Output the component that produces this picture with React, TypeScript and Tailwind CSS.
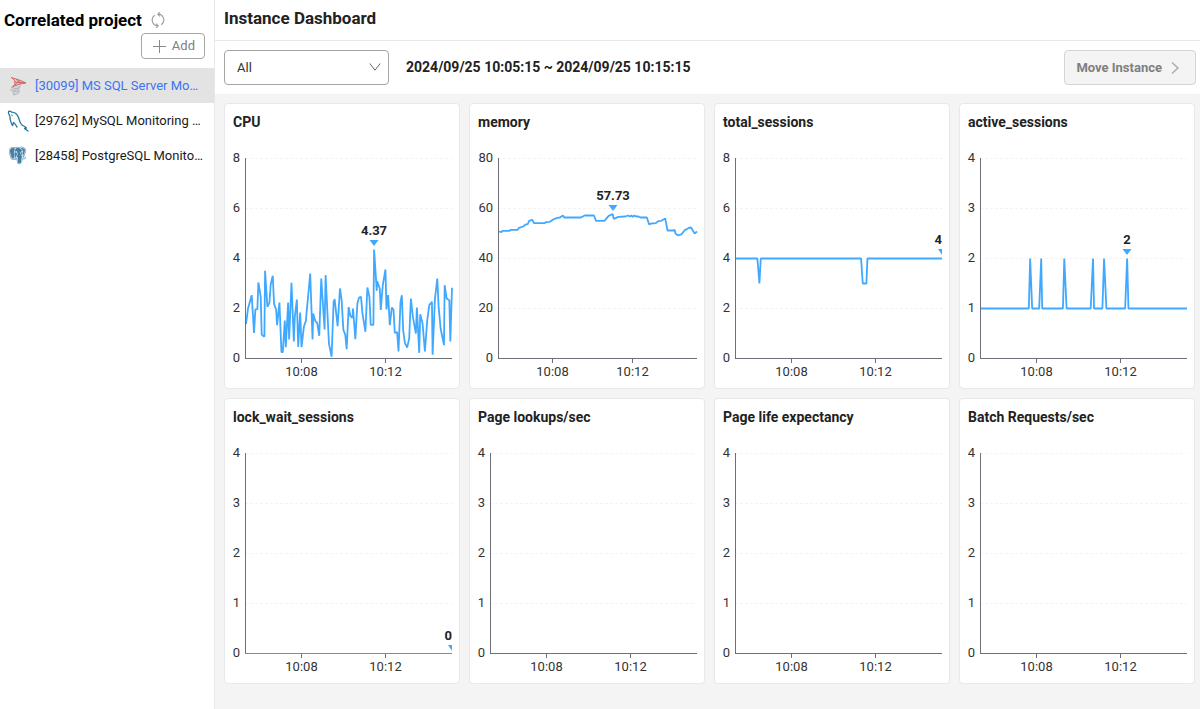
import { useState } from "react";
import { BiLogoPostgresql } from "react-icons/bi";

type Marker = { label: string; x: number; y: number; atEdge?: boolean };

type Chart = {
  title: string;
  ticks: number[];
  axisX: number;
  timeX: [number, number];
  baseline?: string;
  series?: { viewBox: string; points: string };
  marker?: Marker;
};

const CPU_POINTS =
  "64,312 70,265 81,225 88,338 92,268 98,267 101,187 108,230 111,343 119,350 121,152 128,260 134,248 138,192 144,167 148,252 154,268 157,315 164,247 170,396 174,396 180,301 183,381 190,247 193,358 200,188 207,364 210,290 216,238 220,380 226,277 230,381 237,320 243,302 256,160 263,358 265,280 271,302 277,309 283,347 289,175 299,328 302,165 312,370 320,410 326,245 329,237 338,318 345,205 350,240 355,328 361,345 365,387 371,261 376,287 382,293 384,265 391,357 397,250 402,232 408,230 412,278 421,335 427,202 433,230 437,314 445,314 447,88 455,212 456,183 464,205 467,269 473,195 481,148 484,268 489,225 494,315 500,262 505,268 509,338 516,336 520,394 526,245 530,225 534,330 539,368 546,382 552,355 557,235 563,290 572,340 575,262 582,398 585,282 592,310 599,394 606,300 612,255 620,245 622,404 629,235 636,175 640,260 646,325 656,375 658,195 664,235 672,240 675,364 680,203";

const MEMORY_POINTS =
  "88,394 95,396 98,392 118,392 124,389 144,389 148,383 160,379 168,373 174,372 178,362 187,359 193,369 224,369 228,366 240,365 250,358 262,353 270,352 279,346 283,352 333,352 344,346 372,346 378,362 403,362 416,347 428,342 431,356 445,350 466,349 474,346 479,349 484,346 488,350 493,346 498,349 505,349 511,352 530,352 537,373 543,370 557,369 564,363 573,362 585,355 592,391 610,391 613,389 616,401 624,406 634,402 643,390 650,387 655,383 662,382 668,392 673,400 680,394";

const ACTIVE_POINTS =
  "64,265 207,265 211,115 217,265 238,265 244,115 247,265 309,265 313,115 320,265 392,265 399,115 402,265 427,265 432,115 439,265 495,265 501,115 505,265 680,265";

const charts: Chart[] = [
  {
    title: "CPU",
    ticks: [8, 6, 4, 2, 0],
    axisX: 20,
    timeX: [76, 160],
    series: { viewBox: "61 -185 619 600", points: CPU_POINTS },
    marker: { label: "4.37", x: 149, y: 100 },
  },
  {
    title: "memory",
    ticks: [80, 60, 40, 20, 0],
    axisX: 28,
    timeX: [82, 162],
    series: { viewBox: "85 175 595 600", points: MEMORY_POINTS },
    marker: { label: "57.73", x: 143, y: 65 },
  },
  {
    title: "total_sessions",
    ticks: [8, 6, 4, 2, 0],
    axisX: 20,
    timeX: [76, 160],
    series: {
      viewBox: "77 -185 619 600",
      points: "78,115 144,115 150,190 154,115 454,115 459,190 470,190 473,115 696,115",
    },
    marker: { label: "4", x: 227, y: 109, atEdge: true },
  },
  {
    title: "active_sessions",
    ticks: [4, 3, 2, 1, 0],
    axisX: 20,
    timeX: [76, 160],
    series: { viewBox: "61 -185 619 600", points: ACTIVE_POINTS },
    marker: { label: "2", x: 167, y: 109 },
  },
  {
    title: "lock_wait_sessions",
    ticks: [4, 3, 2, 1, 0],
    axisX: 20,
    timeX: [76, 160],
    baseline: "#5596d0",
    marker: { label: "0", x: 227, y: 210, atEdge: true },
  },
  { title: "Page lookups/sec", ticks: [4, 3, 2, 1, 0], axisX: 20, timeX: [76, 160] },
  { title: "Page life expectancy", ticks: [4, 3, 2, 1, 0], axisX: 20, timeX: [76, 160] },
  { title: "Batch Requests/sec", ticks: [4, 3, 2, 1, 0], axisX: 20, timeX: [76, 160] },
];

const PLOT_TOP = 18;
const PLOT_HEIGHT = 200;
const PLOT_RIGHT = 227;

function LineChart({ chart }: { chart: Chart }) {
  const { ticks, axisX, timeX, series, marker, baseline = "#6e7079" } = chart;
  const bottom = PLOT_TOP + PLOT_HEIGHT;
  return (
    <svg viewBox="0 0 234 248" className="block h-auto w-full" role="img" aria-label={chart.title}>
      {ticks.map((tick, i) => {
        const y = PLOT_TOP + (i * PLOT_HEIGHT) / 4;
        return (
          <g key={tick}>
            {i < 4 && (
              <line x1={axisX} x2={PLOT_RIGHT} y1={y + 0.5} y2={y + 0.5} stroke="#f3f3f3" strokeDasharray="3 2" />
            )}
            <text x={axisX - 5} y={y + 4} textAnchor="end" fontSize="13" fill="#333333">
              {tick}
            </text>
          </g>
        );
      })}
      {series && (
        <svg
          x={axisX}
          y={PLOT_TOP + 0.5}
          width={PLOT_RIGHT - axisX}
          height={PLOT_HEIGHT}
          viewBox={series.viewBox}
          preserveAspectRatio="none"
          overflow="visible"
        >
          <polyline
            points={series.points}
            fill="none"
            stroke="#40a9ff"
            strokeWidth="1.8"
            strokeLinejoin="bevel"
            vectorEffect="non-scaling-stroke"
          />
        </svg>
      )}
      <line x1={axisX + 0.5} x2={axisX + 0.5} y1={PLOT_TOP} y2={bottom + 1} stroke="#6e7079" />
      {["10:08", "10:12"].map((time, i) => (
        <g key={time}>
          <line x1={timeX[i] + 0.5} x2={timeX[i] + 0.5} y1={bottom} y2={bottom + 5} stroke="#6e7079" />
          <text x={timeX[i] + 0.5} y={bottom + 18} textAnchor="middle" fontSize="13" fill="#333333">
            {time}
          </text>
        </g>
      ))}
      <line x1={axisX} x2={PLOT_RIGHT} y1={bottom + 0.5} y2={bottom + 0.5} stroke={baseline} />
      {marker && (
        <>
          <path
            d={
              marker.atEdge
                ? `M${marker.x - 4} ${marker.y}h4v6z`
                : `M${marker.x - 4.5} ${marker.y}h9l-4.5 6z`
            }
            fill="#40a9ff"
          />
          <text
            x={marker.x}
            y={marker.y - 5}
            textAnchor={marker.atEdge ? "end" : "middle"}
            fontSize="13"
            fontWeight="700"
            fill="#222222"
          >
            {marker.label}
          </text>
        </>
      )}
    </svg>
  );
}

function SqlServerIcon() {
  return (
    <svg viewBox="0 0 20 20" className="size-5" fill="none" aria-hidden="true">
      <path d="M3 1.5 C6.500 2.200 12 4 18 7 L12.500 8.600 L4.500 11 C7 8.500 8 5.500 3 1.500Z" fill="#e9c5c5" />
      <path
        d="M3 1.500 C9 3.200 13 4.400 18 7 C13 7.400 8 9 3.500 11.500 M4 2 C8 5 8 8 4.500 10.500 M8.500 3.200 L12.500 8 M6.500 6 L17 6.800 M12 4.500 L7 9"
        stroke="#cf5b5d"
        strokeWidth="0.900"
      />
      <path d="M2 13.500 C5 10.500 10 9.500 12.500 9.200 L12 15 C11 18 8 19 5.500 19 L4 16.500Z" fill="#d3d6d9" />
      <path d="M2 13.500 L6 15 L12.500 9.500 L10 13 L11.500 16 L6 15 L5.500 19 L10.500 17.500 M4 11.800 L10 13" stroke="#a9afb5" strokeWidth="0.700" />
    </svg>
  );
}

function MySqlIcon() {
  return (
    <svg viewBox="0 0 22 22" className="size-[22px]" fill="none" stroke="#1f7599" strokeLinejoin="round" strokeLinecap="round" aria-hidden="true">
      <path
        d="M5.500 15.500 C4.500 15 4.300 12.500 3.500 10.500 C2.800 8.500 3.500 7.500 2.500 5.500 C1.500 3.500 .800 2 1.800 1.300 C3 .700 4 1.500 4.800 2.200 C8 2.300 10.500 5 11.500 7.500 C12.500 10.500 13 13.500 15 15 C17 16 18.800 17 19.500 18 C18 18 17.300 18.200 17.800 18.800 L21 21 M5.500 15.500 C6.200 14.800 6.200 13.500 6.500 12.500 C8 13.200 8.800 15.500 10 17"
        strokeWidth="1.300"
      />
      <path d="M4.800 4.800 L5.300 5.800" strokeWidth="1" />
    </svg>
  );
}

const projects = [
  { name: "[30099] MS SQL Server Mo…", icon: <SqlServerIcon /> },
  { name: "[29762] MySQL Monitoring …", icon: <MySqlIcon /> },
  { name: "[28458] PostgreSQL Monito…", icon: <BiLogoPostgresql className="size-[21px] text-[#447fa6]" aria-hidden="true" /> },
];

function Sidebar() {
  const [selected, setSelected] = useState(0);
  return (
    <aside className="w-[215px] shrink-0 border-r border-[#e8e8e8] bg-white">
      <div className="flex h-[33px] items-center gap-2 pt-1.5 pl-1">
        <h2 className="text-[17px] leading-6 font-bold text-black">Correlated project</h2>
        <button type="button" aria-label="Refresh" className="text-[#a0a0a0]">
          <svg viewBox="0 0 16 16" className="size-4" fill="none" stroke="currentColor" strokeWidth="1.200" aria-hidden="true">
            <path d="M4.800 3.200 A5.800 5.800 0 0 0 7.800 13.800 M6 11.600 L8.200 13.800 L6 16" />
            <path d="M11.200 12.800 A5.800 5.800 0 0 0 8.200 2.200 M10 0 L7.800 2.200 L10 4.400" />
          </svg>
        </button>
      </div>
      <div className="flex justify-end pr-[9px] pb-[9px]">
        <button
          type="button"
          className="flex h-[26px] items-center gap-1.5 rounded-[4px] border border-[#a6a6a6] pr-[9px] pl-[11px] text-[13px] text-[#808080]"
        >
          <svg viewBox="0 0 13 13" className="size-[13px]" stroke="#8c8c8c" aria-hidden="true">
            <path d="M6.500 0 V13 M0 6.500 H13" />
          </svg>
          Add
        </button>
      </div>
      <ul>
        {projects.map((project, i) => (
          <li key={project.name}>
            <button
              type="button"
              onClick={() => setSelected(i)}
              className={
                i === selected
                  ? "flex h-[35px] w-full items-center gap-1.5 bg-[#e3e3e3] pr-2 pl-1.5 text-left text-[13px] text-[#3b74f2]"
                  : "flex h-[35px] w-full items-center gap-1.5 pr-2 pl-1.5 text-left text-[13px] text-[#1a1a1a]"
              }
            >
              <span className="flex w-[23px] shrink-0 justify-center">{project.icon}</span>
              <span className="whitespace-nowrap">{project.name}</span>
            </button>
          </li>
        ))}
      </ul>
    </aside>
  );
}

export default function App() {
  return (
    <div className="flex min-h-screen bg-[#f4f4f4] font-[Roboto,sans-serif] text-[#222222]">
      <Sidebar />
      <main className="min-w-0 flex-1">
        <header className="border-b border-[#e8e8e8] bg-white pt-1.5 pb-2.5 pl-[9px]">
          <h1 className="text-[17px] leading-6 font-bold">Instance Dashboard</h1>
        </header>
        <div className="flex items-center bg-white py-[9px] pr-1 pl-[9px]">
          <div className="relative">
            <select
              aria-label="Instance"
              className="block h-[35px] w-[165px] appearance-none rounded-[4px] border border-[#a6a6a6] bg-white pr-8 pl-3 text-[13px] text-[#333333]"
            >
              <option>All</option>
            </select>
            <svg viewBox="0 0 12 8" className="pointer-events-none absolute top-[13px] right-2 h-2 w-3" fill="none" stroke="#666666" aria-hidden="true">
              <path d="M.800 .500 L6 7.200 L11.200 .500" />
            </svg>
          </div>
          <p className="pl-[17px] text-[14px] font-bold">2024/09/25 10:05:15 ~ 2024/09/25 10:15:15</p>
          <button
            type="button"
            className="ml-auto flex h-[35px] items-center gap-[9px] rounded-[4px] border border-[#d4d4d4] bg-[#f4f4f4] pr-4 pl-[11px] text-[13px] font-bold text-[#7f7f7f]"
          >
            Move Instance
            <svg viewBox="0 0 8 12" className="h-3 w-2" fill="none" stroke="#a6a6a6" strokeWidth="1.300" aria-hidden="true">
              <path d="M1 .500 L7 6 L1 11.500" />
            </svg>
          </button>
        </div>
        <div className="grid grid-cols-4 gap-[9px] pt-[9px] pr-[5px] pb-6 pl-[9px]">
          {charts.map((chart) => (
            <section key={chart.title} className="rounded-[4px] border border-[#e8e8e8] bg-white">
              <h2 className="truncate pt-2 pb-2 pl-2 text-[14px] leading-5 font-bold">{chart.title}</h2>
              <LineChart chart={chart} />
            </section>
          ))}
        </div>
      </main>
    </div>
  );
}
